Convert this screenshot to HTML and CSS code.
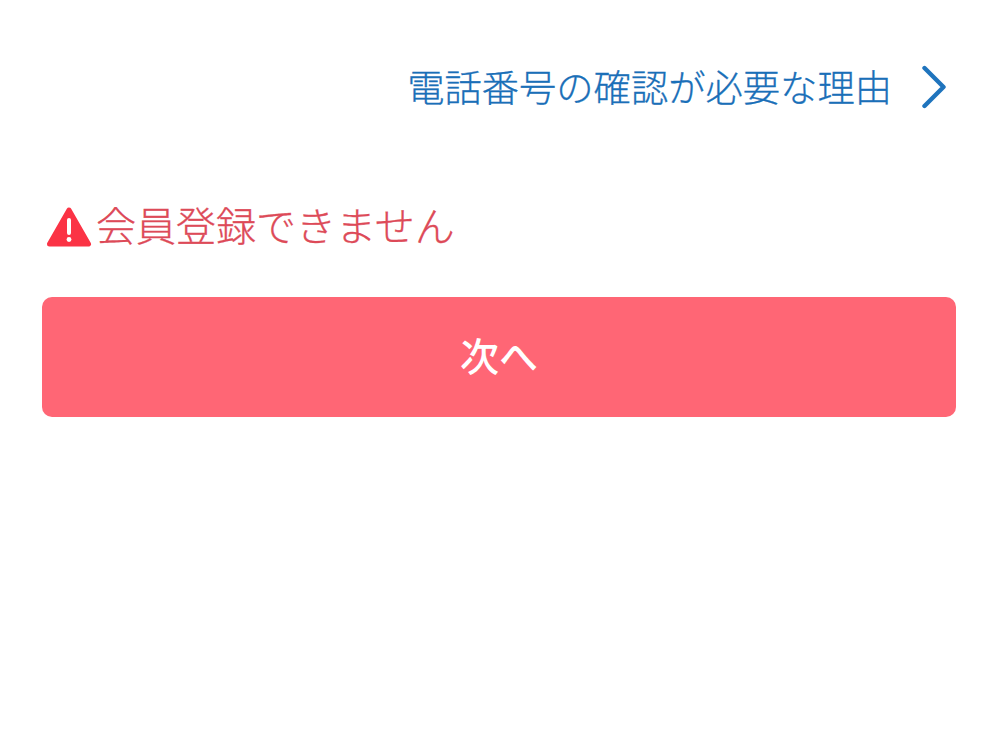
FILE: index.html
```html
<!DOCTYPE html>
<html lang="ja">
<head>
    <meta charset="UTF-8">
    <meta name="viewport" content="width=device-width, initial-scale=1.0">
    <title>電話番号の確認</title>
    <link rel="stylesheet" href="styles.css">
</head>
<body>
    <div class="page">
        <a class="reason-link" href="#">
            <span>電話番号の確認が必要な理由</span>
            <svg class="chevron" width="26" height="46" viewBox="0 0 26 46" aria-hidden="true">
                <path d="M4.5 4L23.5 23L4.5 42" fill="none" stroke="#1f74bd" stroke-width="4.4" stroke-linecap="round" stroke-linejoin="round"/>
            </svg>
        </a>
        <div class="error-row">
            <svg class="warning" width="46" height="42" viewBox="0 0 46 42" aria-hidden="true">
                <path d="M23 4L42.5 38H3.5Z" fill="#fb3345" stroke="#fb3345" stroke-width="5" stroke-linejoin="round"/>
                <rect x="21" y="12" width="4" height="17" rx="2" fill="#fff"/>
                <circle cx="23" cy="33.5" r="2.4" fill="#fff"/>
            </svg>
            <span class="error-text">会員登録できません</span>
        </div>
        <button class="next-button">次へ</button>
    </div>
</body>
</html>
```

FILE: styles.css
```css
/* General Styles */
body {
    margin: 0;
    background-color: #fff;
    font-family: "Noto Sans CJK JP", "Noto Sans", sans-serif;
}

.page {
    display: flex;
    flex-direction: column;
    padding: 63px 43px 0 42px;
}

.reason-link {
    display: flex;
    justify-content: flex-end;
    align-items: center;
    gap: 28px;
    height: 48px;
    padding-right: 10px;
    font-size: 37.3px;
    font-weight: 300;
    line-height: 44px;
    color: #1a6fb8;
    text-decoration: none;
}

.reason-link span {
    margin-top: -2px;
    -webkit-text-stroke: 0.3px #1a6fb8;
}

/* Error message */
.error-row {
    display: flex;
    align-items: center;
    gap: 4px;
    height: 50px;
    margin-top: 91px;
    padding-left: 4px;
}

.error-text {
    margin-top: -7px;
    font-size: 40px;
    font-weight: 300;
    line-height: 50px;
    color: #dd4a58;
    -webkit-text-stroke: 0.3px #dd4a58;
}

.next-button {
    height: 120px;
    margin-top: 45px;
    padding-bottom: 8px;
    background-color: #ff6675;
    border: none;
    border-radius: 10px;
    color: #fff;
    font-family: inherit;
    font-size: 39px;
    font-weight: 500;
}
```
